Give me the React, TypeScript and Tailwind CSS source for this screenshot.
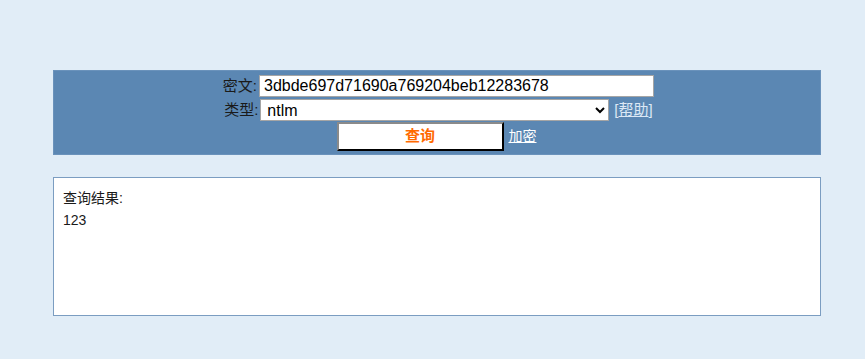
export default function App() {
  return (
    <div className="min-h-[359px] bg-[#e1edf7] pt-[70px] font-['Liberation_Sans','Noto_Sans_CJK_SC',sans-serif]">
      <div className="ml-[53px] w-[768px]">
        {/* query form */}
        <div className="bg-[#5b87b3] pt-[4px] pb-[2px] border border-[#6a92bb]">
          <div className="flex justify-center items-center h-[22px]">
            <span className="text-[15px] text-[#1a1a1a] w-[37px] text-right mr-[2px]">密文:</span>
            <input
              className="w-[395px] h-[22px] bg-white border border-[#a5a5a5] px-[4px] text-[16px] text-black outline-none"
              defaultValue="3dbde697d71690a769204beb12283678"
            />
          </div>
          <div className="flex justify-center items-center h-[22px] mt-[2px]">
            <span className="text-[15px] text-[#1a1a1a] w-[37px] text-right mr-[2px]">类型:</span>
            <select className="w-[349px] h-[22px] bg-white border border-[#a5a5a5] pl-[2px] text-[16px] text-black outline-none">
              <option>ntlm</option>
            </select>
            <a className="ml-[5px] text-[15px] text-[#dce8f5]" href="#">[<span className="underline">帮助</span>]</a>
          </div>
          <div className="flex justify-center items-center h-[31px] pr-[1px]">
            <button className="w-[167px] h-[29px] bg-white border-2 border-t-[#8a8a8a] border-l-[#8a8a8a] border-b-black border-r-black text-[15px] font-bold text-[#ff6a00]">
              查询
            </button>
            <a className="ml-[5px] text-[14px] text-white underline" href="#">加密</a>
          </div>
        </div>

        {/* result */}
        <div className="mt-[22px] h-[139px] bg-white border-[1.5px] border-[#7b9dc1] px-[9px] pt-[9px] text-[14px] leading-[22px] text-[#1a1a1a]">
          <div>查询结果:</div>
          <div>123</div>
        </div>
      </div>
    </div>
  );
}
